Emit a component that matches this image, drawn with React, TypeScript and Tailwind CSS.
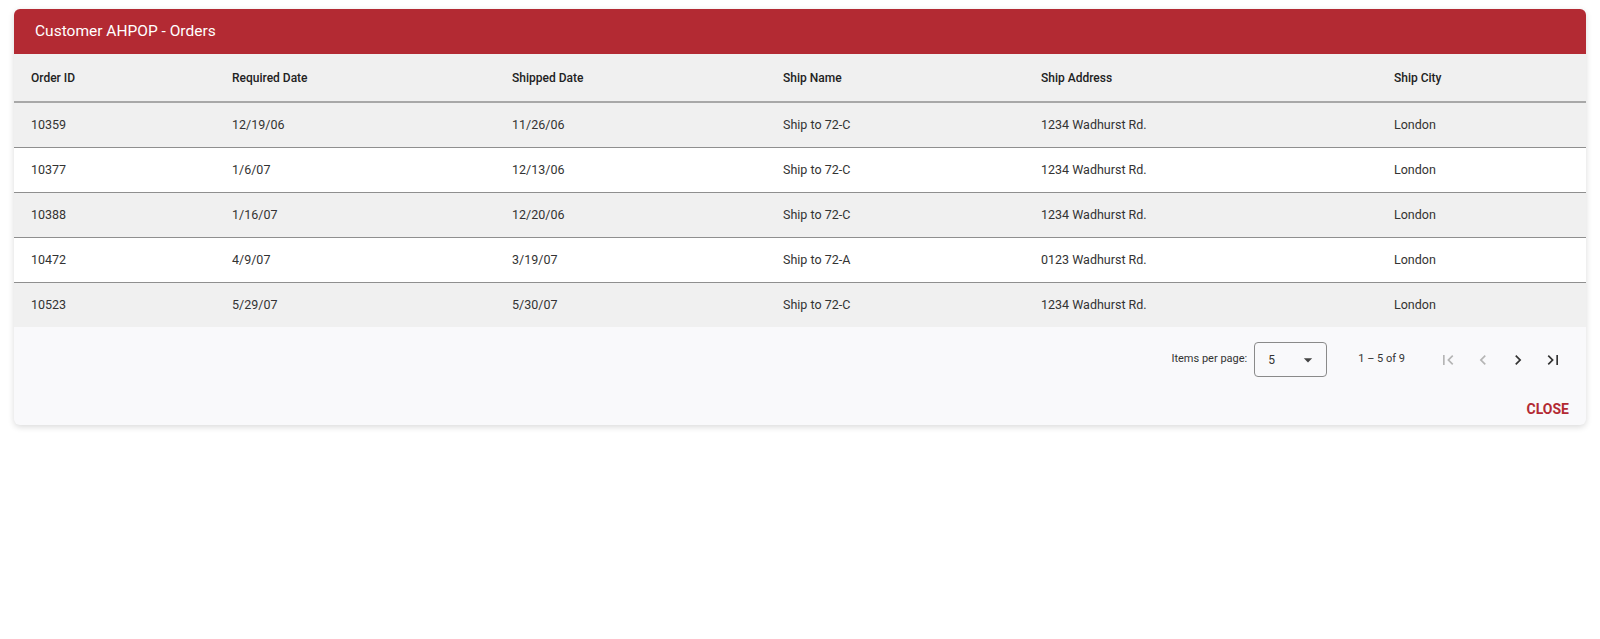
import React from "react";

const rows = [
  ["10359", "12/19/06", "11/26/06", "Ship to 72-C", "1234 Wadhurst Rd.", "London"],
  ["10377", "1/6/07", "12/13/06", "Ship to 72-C", "1234 Wadhurst Rd.", "London"],
  ["10388", "1/16/07", "12/20/06", "Ship to 72-C", "1234 Wadhurst Rd.", "London"],
  ["10472", "4/9/07", "3/19/07", "Ship to 72-A", "0123 Wadhurst Rd.", "London"],
  ["10523", "5/29/07", "5/30/07", "Ship to 72-C", "1234 Wadhurst Rd.", "London"],
];

const headers = ["Order ID", "Required Date", "Shipped Date", "Ship Name", "Ship Address", "Ship City"];

const gridCols = "grid grid-cols-[201px_280px_271px_258px_353px_1fr]";

function Icon({ d, className }: { d: string; className?: string }) {
  return (
    <svg viewBox="0 0 24 24" width="20" height="20" className={className} fill="currentColor">
      <path d={d} />
    </svg>
  );
}

export default function App() {
  return (
    <div className="w-[1600px] h-[639px] bg-white" style={{ fontFamily: "Roboto, 'Liberation Sans', sans-serif" }}>
      <div className="pt-[9px] px-[14px]">
        <div className="rounded-[6px] overflow-hidden shadow-[0_2px_6px_rgba(0,0,0,0.15)] bg-[#f9f9fb]">
          <div className="h-[45px] bg-[#b32a33] flex items-center pl-[21px] text-white text-[15.5px]">
            Customer AHPOP - Orders
          </div>
          <div className={`${gridCols} h-[49px] items-center bg-[#f0f0f0] border-b-2 border-[#a8a8a8] text-[12px] font-medium text-[#222]`}>
            {headers.map((h) => (
              <div key={h} className="pl-[17px]">{h}</div>
            ))}
          </div>
          {rows.map((r, i) => (
            <div
              key={r[0]}
              className={`${gridCols} ${i < rows.length - 1 ? "h-[45px] border-b border-[#8f8f8f]" : "h-[44px]"} items-center text-[12.5px] text-[#333] ${i % 2 === 0 ? "bg-[#f0f0f0]" : "bg-white"}`}
            >
              {r.map((c, j) => (
                <div key={j} className="pl-[17px]">{c}</div>
              ))}
            </div>
          ))}
          <div className="h-[65px] flex items-center justify-end pr-[23px] text-[12px] text-[#333]">
            <span className="mr-[7px] text-[11px]">Items per page:</span>
            <div className="w-[73px] h-[35px] border border-[#8a8a8a] rounded-[4px] flex items-center justify-between pl-[13px] pr-[8px] text-[12px]">
              <span>5</span>
              <svg viewBox="0 0 24 24" width="20" height="20" fill="#444">
                <path d="M7 10l5 5 5-5z" />
              </svg>
            </div>
            <span className="ml-[31px] mr-[33px] text-[11px]">1 – 5 of 9</span>
            <div className="flex items-center gap-[15px]">
              <Icon className="text-[#b5b5b5]" d="M18.41 16.59L13.82 12l4.59-4.59L17 6l-6 6 6 6zM6 6h2v12H6z" />
              <Icon className="text-[#b5b5b5]" d="M15.41 7.41L14 6l-6 6 6 6 1.41-1.41L10.83 12z" />
              <Icon className="text-[#333]" d="M10 6L8.59 7.41 13.17 12l-4.58 4.59L10 18l6-6z" />
              <Icon className="text-[#333]" d="M5.59 7.41L10.18 12l-4.59 4.59L7 18l6-6-6-6zM16 6h2v12h-2z" />
            </div>
          </div>
          <div className="h-[33px] flex items-center justify-end pr-[17px]">
            <span className="text-[14px] font-bold text-[#b32a33] leading-[16px]">CLOSE</span>
          </div>
        </div>
      </div>
    </div>
  );
}
